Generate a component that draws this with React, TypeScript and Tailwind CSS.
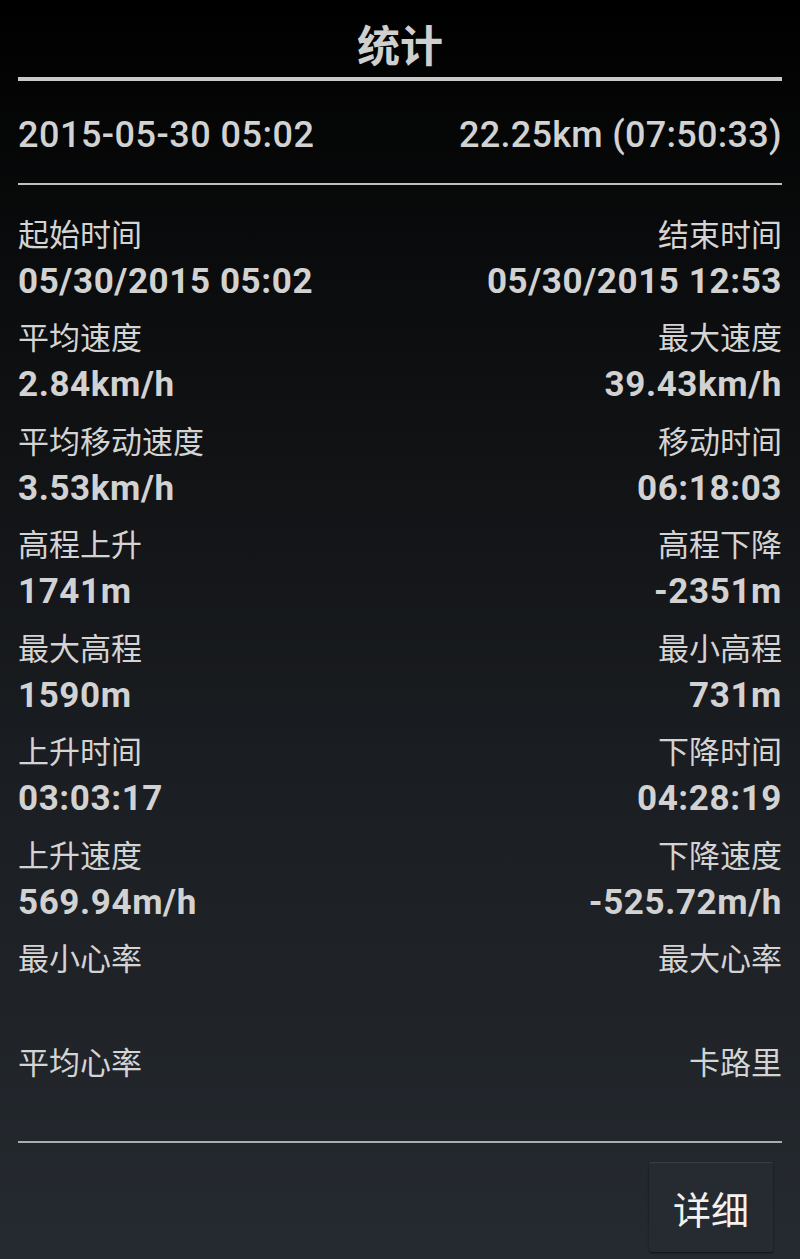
import React from "react";

const rows: [string, string, string, string][] = [
  ["起始时间", "05/30/2015 05:02", "结束时间", "05/30/2015 12:53"],
  ["平均速度", "2.84km/h", "最大速度", "39.43km/h"],
  ["平均移动速度", "3.53km/h", "移动时间", "06:18:03"],
  ["高程上升", "1741m", "高程下降", "-2351m"],
  ["最大高程", "1590m", "最小高程", "731m"],
  ["上升时间", "03:03:17", "下降时间", "04:28:19"],
  ["上升速度", "569.94m/h", "下降速度", "-525.72m/h"],
  ["最小心率", "", "最大心率", ""],
  ["平均心率", "", "卡路里", ""],
];

const cjk = { fontFamily: '"Noto Sans CJK SC", sans-serif' };
const num = { fontFamily: 'Roboto, "Noto Sans CJK SC", sans-serif' };

export default function App() {
  return (
    <div className="w-[800px] h-[1259px] overflow-hidden bg-[linear-gradient(to_bottom,#000000_0%,#0a0b0c_20%,#1a1d21_60%,#252a30_100%)] flex flex-col">
      <div className="h-[77px] flex items-center justify-center pt-[10px]">
        <span style={cjk} className="text-[43px] font-bold text-[#cfcfcf] leading-none">统计</span>
      </div>
      <div className="mx-[18px] h-[4px] bg-[#c9c9c9]" />
      <div className="h-[102px] mx-[18px] flex items-center justify-between pt-[5px] text-[#d2d2d2]" style={num}>
        <span className="text-[36px] font-medium tracking-[0.5px]">2015-05-30 05:02</span>
        <span className="text-[36px] font-medium tracking-[0.3px]">22.25km (07:50:33)</span>
      </div>
      <div className="mx-[18px] h-[2px] bg-[#c0c0c0]" />
      <div className="mt-[29.5px] mx-[18px] flex flex-col">
        {rows.map((r, i) => (
          <div key={i} className={(i === rows.length - 1 ? "h-[98.5px]" : "h-[103.5px]") + " flex justify-between"}>
            <div className="flex flex-col items-start">
              <span style={cjk} className="text-[31px] leading-[36px] text-[#d4d4d4]">{r[0]}</span>
              {r[1] && (
                <span style={num} className="mt-[11px] text-[35px] leading-[40px] font-bold text-[#d2d2d2] tracking-[0.6px]">{r[1]}</span>
              )}
            </div>
            <div className="flex flex-col items-end">
              <span style={cjk} className="text-[31px] leading-[36px] text-[#d4d4d4]">{r[2]}</span>
              {r[3] && (
                <span style={num} className="mt-[11px] text-[35px] leading-[40px] font-bold text-[#d2d2d2] tracking-[0.6px]">{r[3]}</span>
              )}
            </div>
          </div>
        ))}
      </div>
      <div className="mx-[18px] h-[2px] bg-[#a9adb1]" />
      <div className="flex justify-end pr-[27px] mt-[19px]">
        <div className="w-[124px] h-[90px] bg-[#262b31] rounded-[3px] border-t border-t-[#3b4046] shadow-[0_1px_2px_rgba(0,0,0,0.6)] flex items-center justify-center">
          <span style={cjk} className="text-[38px] text-[#f2f2f2] leading-none">详细</span>
        </div>
      </div>
    </div>
  );
}
